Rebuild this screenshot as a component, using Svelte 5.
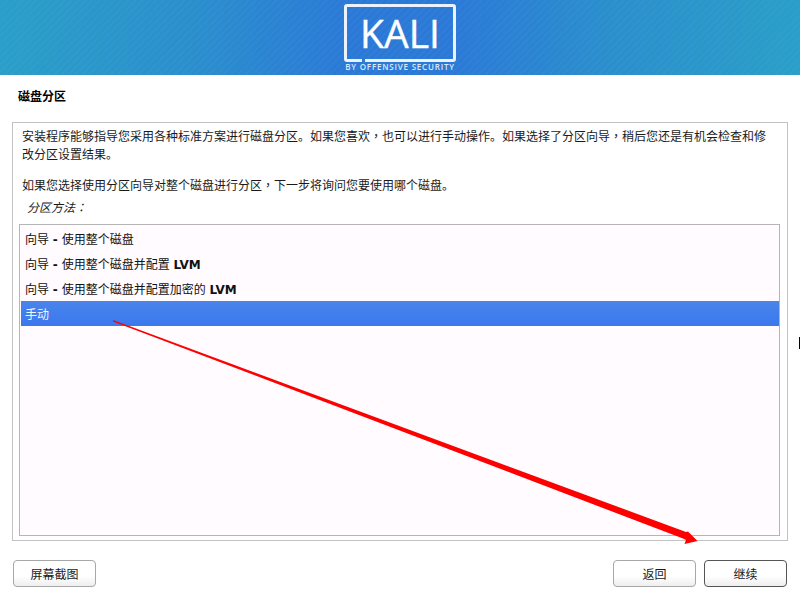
<script>
  const methods = [
    { zh: '使用整个磁盘', lvm: '' },
    { zh: '使用整个磁盘并配置 ', lvm: 'LVM' },
    { zh: '使用整个磁盘并配置加密的 ', lvm: 'LVM' }
  ];
</script>

<div class="page">
  <header class="banner">
    <div class="logo">
      <div class="logo-box">KALI</div>
      <div class="logo-sub">BY OFFENSIVE SECURITY</div>
    </div>
  </header>
  <h1>磁盘分区</h1>
  <section class="panel">
    <p class="intro">安装程序能够指导您采用各种标准方案进行磁盘分区。如果您喜欢<span class="punct">，</span>也可以进行手动操作。如果选择了分区向导<span class="punct">，</span>稍后您还是有机会检查和修改分区设置结果。</p>
    <p class="intro second">如果您选择使用分区向导对整个磁盘进行分区<span class="punct">，</span>下一步将询问您要使用哪个磁盘。</p>
    <p class="label">分区方法<span class="punct">：</span></p>
    <div class="list">
      {#each methods as m}
        <div class="row">向导 <b>-</b> {m.zh}<b>{m.lvm}</b></div>
      {/each}
      <div class="row selected">手动</div>
    </div>
  </section>
  <footer>
    <button>屏幕截图</button>
    <div class="right">
      <button>返回</button>
      <button class="primary">继续</button>
    </div>
  </footer>
  <svg class="arrow" width="800" height="600" viewBox="0 0 800 600" aria-hidden="true">
    <polygon points="113,320 686,532 688,531.5 697.5,541 684.5,544 686,540 683,538.5 113,321.4" fill="#f00" />
  </svg>
  <div class="cursor"></div>
</div>

<style>
  :global(body) {
    margin: 0;
    background: #fff;
  }
  .page {
    position: relative;
    width: 800px;
    height: 600px;
    overflow: hidden;
    font-family: "DejaVu Sans", "Noto Sans CJK SC", sans-serif;
    font-size: 12px;
    color: #1a1a1a;
    display: flex;
    flex-direction: column;
  }
  .banner {
    height: 75px;
    flex: none;
    display: flex;
    justify-content: center;
    background:
      repeating-linear-gradient(135deg, rgba(255, 255, 255, 0.025) 0 2px, rgba(255, 255, 255, 0) 2px 5px),
      linear-gradient(92deg, #2a9fc8 0%, #2a8ecd 25%, #2b79d7 44%, #2b79d7 56%, #2a8ecd 75%, #2a9fc8 100%);
  }
  .logo {
    width: 112px;
    padding-top: 4px;
    color: #fff;
    display: flex;
    flex-direction: column;
    align-items: center;
  }
  .logo-box {
    position: relative;
    box-sizing: border-box;
    width: 112px;
    height: 58px;
    border: 3px solid #eaf2fc;
    border-radius: 3px;
    font-family: "Open Sans", sans-serif;
    font-weight: 500;
    -webkit-text-stroke: 0.4px #fff;
    font-size: 39px;
    line-height: 51px;
    text-align: center;
  }
  .logo-box::after {
    content: "";
    position: absolute;
    left: 15px;
    bottom: -3px;
    width: 3px;
    height: 3px;
    background: #2b7dd5;
  }
  .logo-sub {
    font-family: "Open Sans", sans-serif;
    font-weight: 600;
    font-size: 8px;
    line-height: 10px;
    letter-spacing: 0.8px;
    white-space: nowrap;
    color: #dbe8f8;
  }
  h1 {
    margin: 0;
    height: 47px;
    box-sizing: border-box;
    padding: 13px 18px 0;
    font-size: 12px;
    line-height: 18px;
    font-weight: 700;
    color: #000;
  }
  .panel {
    box-sizing: border-box;
    margin: 0 12px;
    height: 419px;
    border: 1px solid #c3c3c3;
    padding: 5px 7px 4px 6px;
    display: flex;
    flex-direction: column;
  }
  p {
    margin: 0;
  }
  .punct {
    font-family: "Noto Sans CJK TC", sans-serif;
    line-height: 0;
  }
  .intro {
    padding: 0 3px;
    line-height: 18px;
  }
  .second {
    margin-top: 13px;
  }
  .label {
    font-style: italic;
    padding-left: 8px;
    line-height: 18px;
    margin-top: 4px;
  }
  .list {
    box-sizing: border-box;
    margin-top: 7px;
    flex: 1;
    border: 1px solid #b5b5b5;
    background: #fffbff;
    padding: 1px 0 1px 1px;
  }
  .row {
    height: 25px;
    line-height: 29px;
    padding-left: 4px;
    white-space: pre;
    color: #111;
  }
  .row b {
    font-weight: 700;
  }
  .selected {
    background: linear-gradient(180deg, #4a84ea, #3a78ee);
    color: #f2f6ff;
  }
  footer {
    display: flex;
    justify-content: space-between;
    margin: 19px 13px 0;
  }
  .right {
    display: flex;
    gap: 8px;
  }
  button {
    width: 83px;
    height: 27px;
    padding: 0;
    font: inherit;
    color: #1a1a1a;
    border: 1px solid #a8a8a8;
    border-radius: 4px;
    background: linear-gradient(180deg, #fff 60%, #eeeeee);
  }
  .primary {
    border-color: #555;
  }
  .arrow {
    position: absolute;
    left: 0;
    top: 0;
    pointer-events: none;
  }
  .cursor {
    position: absolute;
    left: 799px;
    top: 337px;
    width: 1px;
    height: 12px;
    background: #000;
  }
</style>
